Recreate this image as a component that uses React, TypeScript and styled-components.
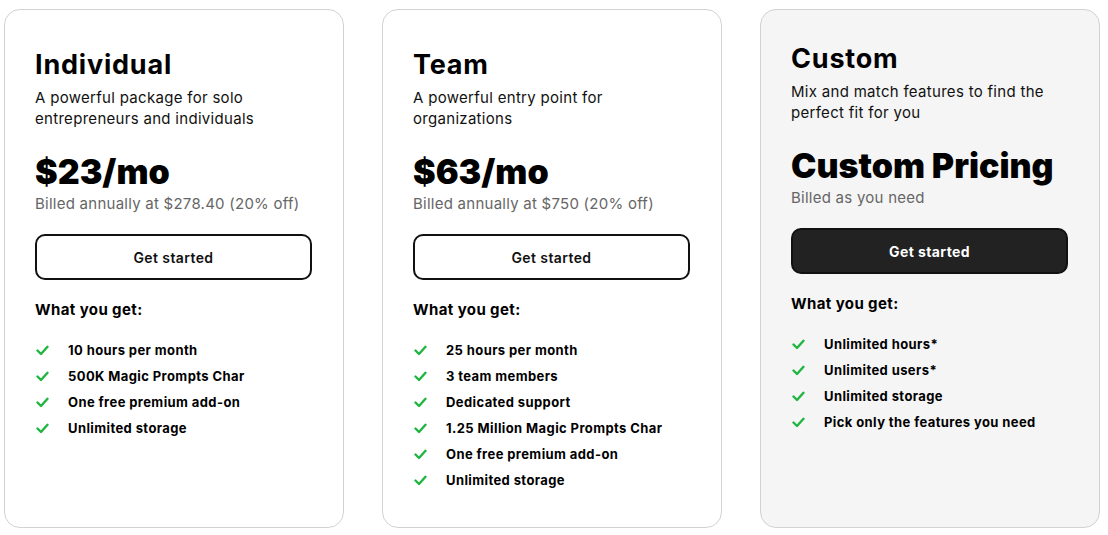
import React from "react";
import styled, { createGlobalStyle } from "styled-components";

const Global = createGlobalStyle`
  html, body { margin: 0; padding: 0; background: #ffffff; }
  body { font-family: "Inter", "Lato", sans-serif; color: #000; }
`;

const Row = styled.div`
  display: flex;
  gap: 38px;
  padding: 9px 0 0 4px;
`;

const Card = styled.div<{ $muted?: boolean }>`
  box-sizing: border-box;
  width: 340px;
  height: 519px;
  border: 1px solid #d2d2d2;
  border-radius: 16px;
  background: ${(p) => (p.$muted ? "#f5f5f5" : "#ffffff")};
  padding: ${(p) => (p.$muted ? "32px" : "38px")} 31px 0 30px;
  display: flex;
  flex-direction: column;
`;

const Title = styled.h2`
  margin: 0;
  font-size: 27px;
  line-height: 34px;
  font-weight: 700;
  letter-spacing: 0.8px;
`;

const Desc = styled.p`
  margin: 5px 0 0;
  font-size: 15px;
  line-height: 21px;
  font-weight: 400;
  color: #111;
  letter-spacing: 0.3px;
`;

const Price = styled.div`
  margin-top: 23px;
  font-size: 34px;
  line-height: 40px;
  font-weight: 900;
  letter-spacing: 0px;
`;

const Billed = styled.div`
  margin-top: 1px;
  font-size: 15px;
  line-height: 22px;
  color: #666;
  letter-spacing: 0.25px;
`;

const Button = styled.button<{ $dark?: boolean }>`
  box-sizing: border-box;
  margin-top: 19px;
  width: 277px;
  height: 46px;
  border: 2px solid #111;
  border-radius: 10px;
  background: ${(p) => (p.$dark ? "#222222" : "#ffffff")};
  color: ${(p) => (p.$dark ? "#ffffff" : "#111")};
  font-family: inherit;
  font-size: 14px;
  font-weight: ${(p) => (p.$dark ? 700 : 600)};
  letter-spacing: 0.4px;
  cursor: pointer;
`;

const Subhead = styled.div`
  margin-top: 19px;
  font-size: 15px;
  line-height: 22px;
  font-weight: 700;
  letter-spacing: 0.4px;
`;

const List = styled.ul`
  list-style: none;
  margin: 19px 0 0;
  padding: 0;
  display: flex;
  flex-direction: column;
  gap: 6px;
`;

const Item = styled.li`
  display: flex;
  align-items: center;
  gap: 19px;
  font-size: 13px;
  line-height: 20px;
  font-weight: 700;
  letter-spacing: 0.4px;
  padding-left: 1px;
`;

const Check = () => (
  <svg width="13" height="11" viewBox="0 0 13 11" fill="none">
    <path d="M1.5 5.5 L5 9 L11.5 1.8" stroke="#1fb53f" strokeWidth="2.4" strokeLinecap="round" strokeLinejoin="round" />
  </svg>
);

type Plan = {
  title: string;
  desc: string;
  price: string;
  billed: string;
  features: string[];
  muted?: boolean;
};

const plans: Plan[] = [
  {
    title: "Individual",
    desc: "A powerful package for solo entrepreneurs and individuals",
    price: "$23/mo",
    billed: "Billed annually at $278.40 (20% off)",
    features: ["10 hours per month", "500K Magic Prompts Char", "One free premium add-on", "Unlimited storage"],
  },
  {
    title: "Team",
    desc: "A powerful entry point for organizations",
    price: "$63/mo",
    billed: "Billed annually at $750 (20% off)",
    features: [
      "25 hours per month",
      "3 team members",
      "Dedicated support",
      "1.25 Million Magic Prompts Char",
      "One free premium add-on",
      "Unlimited storage",
    ],
  },
  {
    title: "Custom",
    desc: "Mix and match features to find the perfect fit for you",
    price: "Custom Pricing",
    billed: "Billed as you need",
    features: ["Unlimited hours*", "Unlimited users*", "Unlimited storage", "Pick only the features you need"],
    muted: true,
  },
];

export default function App() {
  return (
    <>
      <Global />
      <Row>
        {plans.map((p) => (
          <Card key={p.title} $muted={p.muted}>
            <Title>{p.title}</Title>
            <Desc>{p.desc}</Desc>
            <Price>{p.price}</Price>
            <Billed>{p.billed}</Billed>
            <Button $dark={p.muted}>Get started</Button>
            <Subhead>What you get:</Subhead>
            <List>
              {p.features.map((f) => (
                <Item key={f}>
                  <Check />
                  {f}
                </Item>
              ))}
            </List>
          </Card>
        ))}
      </Row>
    </>
  );
}
